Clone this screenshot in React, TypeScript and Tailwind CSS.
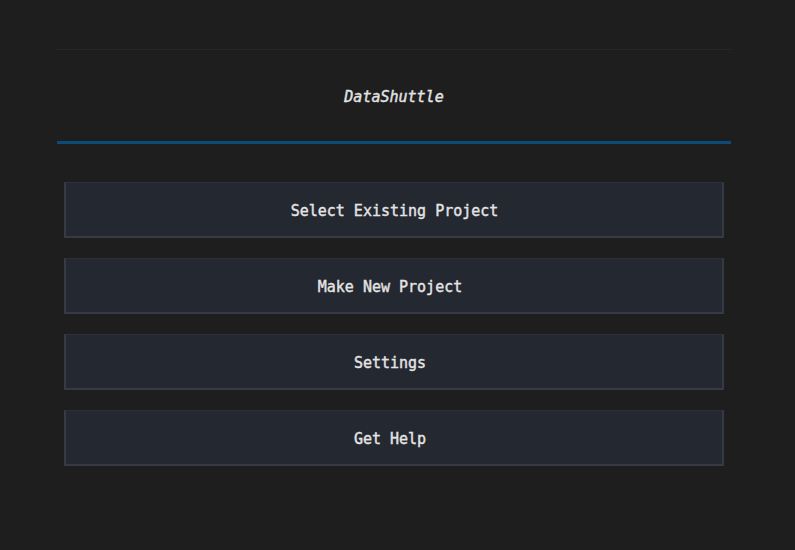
import React from "react";

const mono = "font-['DejaVu_Sans_Mono','Liberation_Mono',monospace]";
// the terminal font is a touch heavier than DejaVu Book
const weight = "[-webkit-text-stroke:0.4px_#e4e4e4]";

// even-length labels sit half a cell left of odd ones (terminal grid centering)
const items = [
  { label: "Select Existing Project" },
  { label: "Make New Project" },
  { label: "Settings" },
  { label: "Get Help" },
];

function MenuButton({ label }: { label: string }) {
  const even = label.length % 2 === 0;
  return (
    <button
      type="button"
      className={`flex h-[56px] w-full items-center justify-center border-x-2 border-b-2 border-t border-x-[#363a43] border-b-[#363a43] border-t-[#2c3038] bg-[#242830] pt-[3px] pl-[1px] text-[15px] text-[#e4e4e4] ${weight} ${mono}`}
    >
      <span className={even ? "pr-[9px]" : ""}>{label}</span>
    </button>
  );
}

export default function App() {
  return (
    <div className="h-[550px] w-full bg-[#1e1e1e] pl-[57px] pr-[64px] pt-[49px]">
      <div className="h-px w-full bg-[#25282c]" />
      <div className="flex h-[91px] items-center justify-center pt-[3px]">
        <span className={`text-[15px] italic text-[#e4e4e4] ${weight} ${mono}`}>DataShuttle</span>
      </div>
      <div className="h-[3px] w-full bg-[#0c4a77]" />
      <div className="mt-[38px] flex flex-col gap-[20px] px-[7px]">
        {items.map((it) => (
          <MenuButton key={it.label} label={it.label} />
        ))}
      </div>
    </div>
  );
}
